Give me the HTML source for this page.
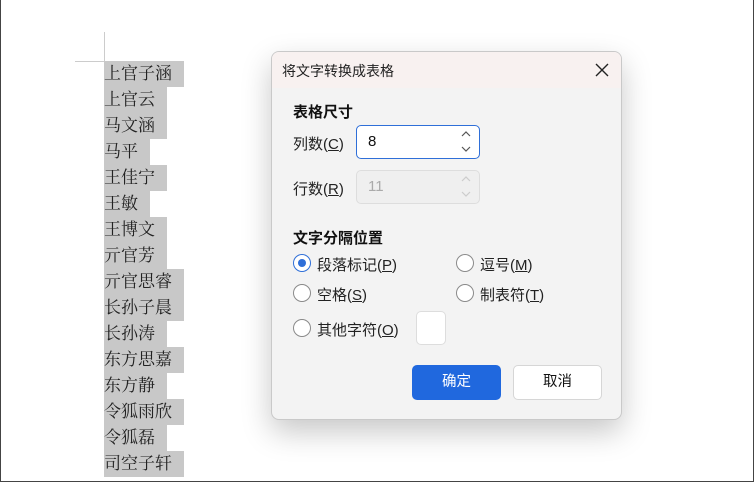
<!DOCTYPE html>
<html><head><meta charset="utf-8"><style>
*{margin:0;padding:0;box-sizing:border-box}
body{width:754px;height:482px;overflow:hidden;background:#fff;position:relative;font-family:"Liberation Sans","Microsoft YaHei","Noto Sans CJK SC",sans-serif}
.frame{position:absolute;left:0;top:0;width:754px;height:482px;border:1px solid #444;border-top:none}
.names{position:absolute;left:104px;top:61px;font-family:"Liberation Serif","Noto Serif CJK SC",serif;font-size:17px;color:#222}
.names div{height:26px;line-height:26px}
.names span{background:#c8c8c8;padding-right:12px;display:inline-block;height:26px}
.dlg{position:absolute;left:271px;top:51px;width:351px;height:369px;background:#f3f3f3;border:1px solid #c9c9c9;border-radius:8px;box-shadow:0 12px 30px rgba(0,0,0,.22);overflow:hidden}
.tb{height:36px;background:#f8f1f0;font-size:14px;color:#222;padding:9px 0 0 10px}
.abs{position:absolute}
.h{font-weight:bold;font-size:15px;color:#111}
.lbl{font-size:15px;color:#222}
.inp{position:absolute;left:83px;width:124px;height:34px;border-radius:5px}
.rad{position:absolute;width:18px;height:18px;border-radius:50%;border:1.5px solid #8a8a8a;background:#fff}
.btn{position:absolute;top:313px;width:89px;height:35px;border-radius:5px;font-size:14.5px;text-align:center;line-height:35px}
u{text-decoration:underline}
</style></head><body>
<div class="frame"></div>
<div class="abs" style="left:104px;top:32px;width:1px;height:29px;background:#ccc"></div>
<div class="abs" style="left:75px;top:61px;width:29px;height:1px;background:#ccc"></div>
<div class="names">
<div><span>上官子涵</span></div><div><span>上官云</span></div><div><span>马文涵</span></div><div><span>马平</span></div><div><span>王佳宁</span></div><div><span>王敏</span></div><div><span>王博文</span></div><div><span>亓官芳</span></div><div><span>亓官思睿</span></div><div><span>长孙子晨</span></div><div><span>长孙涛</span></div><div><span>东方思嘉</span></div><div><span>东方静</span></div><div><span>令狐雨欣</span></div><div><span>令狐磊</span></div><div><span>司空子轩</span></div>
</div>
<div class="dlg">
<div class="tb">将文字转换成表格</div>
<svg class="abs" style="left:323px;top:11px" width="14" height="14"><path d="M1 1L13 13M13 1L1 13" stroke="#222" stroke-width="1.4"/></svg>
<div class="abs h" style="left:21px;top:49px">表格尺寸</div>
<div class="abs lbl" style="left:21px;top:81px">列数(<u>C</u>)</div>
<div class="inp" style="left:84px;top:73px;background:#fff;border:1.5px solid #2f6fd8"></div>
<div class="abs" style="left:96px;top:81px;font-size:15px;color:#111">8</div>
<svg class="abs" style="left:189px;top:78px" width="10" height="24"><path d="M1 6L5 2L9 6M1 17L5 21L9 17" stroke="#555" fill="none" stroke-width="1.2"/></svg>
<div class="abs lbl" style="left:21px;top:126px">行数(<u>R</u>)</div>
<div class="inp" style="left:84px;top:118px;background:#efefef;border:1px solid #ddd"></div>
<div class="abs" style="left:96px;top:126px;font-size:15px;color:#aaa">11</div>
<svg class="abs" style="left:189px;top:123px" width="10" height="24"><path d="M1 6L5 2L9 6M1 17L5 21L9 17" stroke="#ccc" fill="none" stroke-width="1.2"/></svg>
<div class="abs h" style="left:21px;top:175px">文字分隔位置</div>
<div class="rad" style="left:21px;top:202px;border-color:#2f6fd8"><div style="position:absolute;left:3.5px;top:3.5px;width:8px;height:8px;border-radius:50%;background:#2f6fd8"></div></div>
<div class="abs lbl" style="left:45px;top:202px">段落标记(<u>P</u>)</div>
<div class="rad" style="left:184px;top:202px"></div>
<div class="abs lbl" style="left:208px;top:202px">逗号(<u>M</u>)</div>
<div class="rad" style="left:21px;top:232px"></div>
<div class="abs lbl" style="left:45px;top:232px">空格(<u>S</u>)</div>
<div class="rad" style="left:184px;top:232px"></div>
<div class="abs lbl" style="left:208px;top:232px">制表符(<u>T</u>)</div>
<div class="rad" style="left:21px;top:267px"></div>
<div class="abs lbl" style="left:45px;top:267px">其他字符(<u>O</u>)</div>
<div class="abs" style="left:144px;top:259px;width:30px;height:34px;background:#fff;border:1px solid #ddd;border-radius:5px"></div>
<div class="btn" style="left:140px;background:#2068de;color:#fff">确定</div>
<div class="btn" style="left:241px;background:#fff;border:1px solid #d6d6d6;color:#111;line-height:33px">取消</div>
</div>
</body></html>
